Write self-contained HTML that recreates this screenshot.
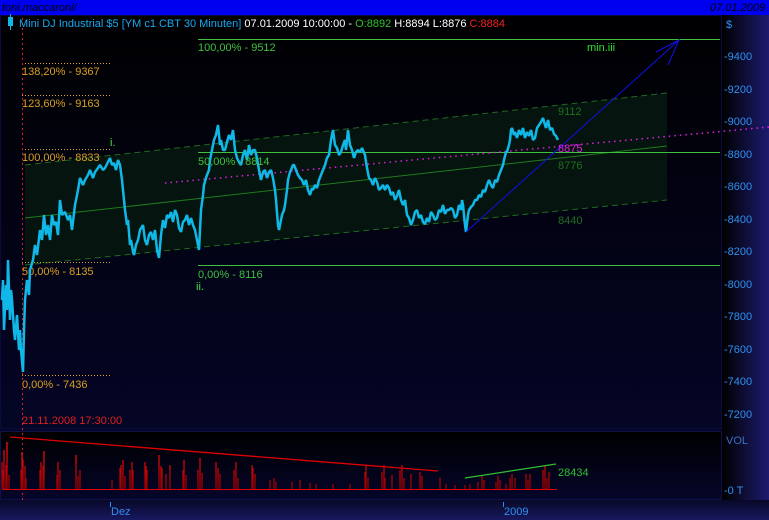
<!DOCTYPE html>
<html><head><meta charset="utf-8"><style>
html,body{margin:0;padding:0;width:769px;height:520px;overflow:hidden;background:#000;}
svg{display:block;font-family:"Liberation Sans",sans-serif;}
</style></head><body>
<svg width="769" height="520" viewBox="0 0 769 520" xmlns="http://www.w3.org/2000/svg">
<defs>
<linearGradient id="bg" x1="0" y1="0" x2="0" y2="1"><stop offset="0" stop-color="#000"/><stop offset="1" stop-color="#06062e"/></linearGradient>
<linearGradient id="ax" x1="0" y1="0" x2="1" y2="0"><stop offset="0" stop-color="#000"/><stop offset="1" stop-color="#1c1c70"/></linearGradient>
<linearGradient id="bt" x1="0" y1="0" x2="0" y2="1"><stop offset="0" stop-color="#080828"/><stop offset="1" stop-color="#181860"/></linearGradient>
<linearGradient id="vb" x1="0" y1="0" x2="0" y2="1"><stop offset="0" stop-color="#000"/><stop offset="1" stop-color="#05052a"/></linearGradient>
<linearGradient id="vr" x1="0" y1="0" x2="0" y2="1"><stop offset="0" stop-color="#ff1010"/><stop offset="1" stop-color="#900000"/></linearGradient>
</defs>
<rect x="0" y="0" width="769" height="520" fill="url(#bg)"/>
<rect x="722" y="15" width="47" height="490" fill="url(#ax)"/>
<rect x="0" y="500" width="769" height="20" fill="url(#bt)"/>
<rect x="0" y="0" width="769" height="15" fill="#0000f0"/>
<text x="2" y="11" font-size="11" font-style="italic" fill="#000">toni.maccaroni/</text>
<text x="710" y="11" font-size="11" font-style="italic" fill="#000">07.01.2009</text>
<rect x="0.5" y="15.5" width="721" height="413" fill="none" stroke="#0a0a40"/>
<rect x="0.5" y="431.5" width="721" height="68" fill="url(#vb)" stroke="#10104a"/>
<polygon points="25,165 667,93 667,200 25,265" fill="#05140e"/>
<line x1="25" y1="165" x2="667" y2="93" stroke="#1f6a1f" stroke-dasharray="6,4"/>
<line x1="25" y1="265" x2="667" y2="200" stroke="#1f6a1f" stroke-dasharray="6,4"/>
<line x1="25" y1="218" x2="667" y2="146" stroke="#1f7a1f"/>
<line x1="198" y1="39.5" x2="720" y2="39.5" stroke="#3fc03f"/>
<line x1="198" y1="152.5" x2="720" y2="152.5" stroke="#3fc03f"/>
<line x1="198" y1="265.5" x2="720" y2="265.5" stroke="#3fc03f"/>
<g stroke="#d8a020" stroke-dasharray="1,2">
<line x1="22" y1="63.5" x2="112" y2="63.5"/><line x1="22" y1="95.5" x2="112" y2="95.5"/>
<line x1="22" y1="149.5" x2="112" y2="149.5"/><line x1="22" y1="262.5" x2="112" y2="262.5"/>
<line x1="22" y1="375.5" x2="112" y2="375.5"/>
</g>
<g font-size="11" fill="#d8a020">
<text x="22" y="75">138,20% - 9367</text><text x="22" y="107">123,60% - 9163</text>
<text x="22" y="161">100,00% - 8833</text><text x="22" y="275">50,00% - 8135</text>
<text x="22" y="388">0,00% - 7436</text>
</g>
<line x1="22.5" y1="18" x2="22.5" y2="500" stroke="#e02020" stroke-dasharray="2,3"/>
<text x="22" y="424" font-size="11" fill="#e02020">21.11.2008 17:30:00</text>
<line x1="165" y1="183" x2="769" y2="127" stroke="#e020e0" stroke-width="1.5" stroke-dasharray="1.5,4"/>
<polyline fill="none" stroke="#10b8e8" stroke-width="2.5" stroke-linejoin="bevel" points="2,300 3,280 4,330 6,285 7,310 8,260 10,320 11,290 12,300 14,330 15,340 17,315 19,350 20,330 21,350 23,372 24,330 25,300 27,280 29,295 30,270 33,260 35,245 37,255 40,230 42,240 44,215 46,235 48,225 50,240 52,215 54,225 56,222 58,235 60,200 62,215 65,212 68,220 70,215 72,230 75,205 78,190 80,178 83,185 85,180 88,175 90,170 93,178 95,172 98,168 100,165 103,170 105,168 108,162 110,158 112,165 114,163 116,170 118,160 120,165 122,180 124,200 125,210 127,225 128,220 130,245 131,240 133,252 134,255 136,245 138,240 140,230 143,225 145,240 147,245 149,235 151,232 153,240 155,230 157,250 159,258 161,235 163,220 165,228 167,215 169,218 171,212 173,222 175,210 177,215 179,228 181,232 183,222 185,220 187,215 189,225 191,218 193,225 195,230 197,240 199,250 200,230 201,210 203,195 204,185 206,178 207,175 209,170 210,160 212,150 214,140 216,135 218,125 220,145 221,140 223,150 225,150 227,142 229,135 231,140 233,130 235,150 237,158 239,162 241,165 243,155 245,150 247,160 249,145 251,155 253,150 255,150 257,158 259,170 261,180 263,172 265,170 267,178 269,172 271,170 273,178 275,190 276,200 278,225 279,230 281,220 282,215 284,210 285,205 287,190 288,180 290,172 291,170 293,165 294,165 296,170 298,175 300,178 302,180 304,185 306,180 308,190 310,195 312,188 313,190 315,185 317,188 319,180 321,175 323,170 325,165 327,158 329,155 331,140 333,130 335,145 337,148 339,155 341,152 343,145 345,140 346,150 348,130 350,145 352,150 354,158 356,152 358,150 360,152 362,148 365,155 367,168 369,178 371,180 373,185 375,178 377,182 379,190 381,188 383,185 385,190 387,185 389,188 391,195 393,192 395,200 397,196 399,190 401,200 403,205 405,200 407,215 409,218 411,225 413,220 415,212 417,210 419,218 421,215 423,222 425,224 427,218 429,222 431,212 433,215 435,220 437,218 439,210 441,212 443,205 445,214 447,210 449,210 451,208 453,210 455,218 457,215 459,205 461,210 462,200 463,205 465,225 466,232 468,215 469,210 471,207 473,205 475,200 477,200 479,195 481,197 483,190 485,192 487,185 489,180 491,185 493,188 495,180 497,182 499,175 501,170 503,165 504,160 506,152 507,152 509,145 510,140 511,130 512,128 514,135 515,132 517,138 519,130 521,135 523,128 525,138 527,132 529,136 531,130 533,140 535,138 537,128 539,125 541,122 543,118 545,125 546,128 548,120 550,130 552,128 554,134 556,136 558,140"/>
<line x1="466" y1="232" x2="679" y2="40" stroke="#1010e8"/>
<polyline points="656,52 679,40 668,65" fill="none" stroke="#1010e8"/>
<g font-size="11">
<text x="198" y="51" fill="#3fc03f">100,00% - 9512</text>
<text x="198" y="165" fill="#3fc03f">50,00% - 8814</text>
<text x="198" y="278" fill="#3fc03f">0,00% - 8116</text>
<text x="196" y="290" fill="#40e040">ii.</text>
<text x="110" y="146" fill="#40e040">i.</text>
<text x="587" y="51" fill="#30e030">min.iii</text>
<text x="558" y="115" fill="#207020">9112</text>
<text x="558" y="152" fill="#e020e0">8875</text>
<text x="558" y="169" fill="#207020">8776</text>
<text x="558" y="224" fill="#207020">8440</text>
</g>
<rect x="8" y="17" width="5" height="9" fill="#10b8e8"/><line x1="10.5" y1="14" x2="10.5" y2="30" stroke="#10b8e8"/>
<text x="19" y="27" font-size="11"><tspan fill="#18a8f0">Mini DJ Industrial $5 [YM c1 CBT  30 Minuten]</tspan><tspan fill="#fff"> 07.01.2009 10:00:00 - </tspan><tspan fill="#30c030">O:8892</tspan><tspan fill="#fff"> H:8894 L:8876 </tspan><tspan fill="#f02020">C:8884</tspan></text>
<g font-size="11" fill="#3090f0">
<text x="726" y="28">$</text>
<text x="724" y="60">-9400</text><text x="724" y="93">-9200</text><text x="724" y="125">-9000</text>
<text x="724" y="158">-8800</text><text x="724" y="190">-8600</text><text x="724" y="223">-8400</text>
<text x="724" y="255">-8200</text><text x="724" y="288">-8000</text><text x="724" y="320">-7800</text>
<text x="724" y="353">-7600</text><text x="724" y="385">-7400</text><text x="724" y="418">-7200</text>
<text x="726" y="444" fill="#3a70c0">VOL</text><text x="724" y="494">-0 T</text>
<text x="111" y="515">Dez</text><text x="504" y="515">2009</text>
</g>
<line x1="110.5" y1="502" x2="110.5" y2="507" stroke="#3090f0"/><line x1="503.5" y1="502" x2="503.5" y2="507" stroke="#3090f0"/>
<line x1="2" y1="489.5" x2="557" y2="489.5" stroke="#e00000"/>
<path stroke="url(#vr)" fill="none" stroke-width="1.3" d="M2 489V462M3 489V470M4 489V450M6 489V465M7 489V442M9 489V475M21 489V470M22 489V452M23 489V460M25 489V466M26 489V478M40 489V470M41 489V462M43 489V466M44 489V451M57 489V475M58 489V462M60 489V470M76 489V455M78 489V476M80 489V470M112 489V480M120 489V468M121 489V465M123 489V460M125 489V476M130 489V470M132 489V462M133 489V470M145 489V462M146 489V466M147 489V470M159 489V455M161 489V466M162 489V468M166 489V474M170 489V465M183 489V470M184 489V460M186 489V475M198 489V470M200 489V458M202 489V473M216 489V462M218 489V468M220 489V474M234 489V470M236 489V462M238 489V478M252 489V465M253 489V468M255 489V474M270 489V480M274 489V478M276 489V482M292 489V482M300 489V480M310 489V483M316 489V484M333 489V484M350 489V484M365 489V472M366 489V466M368 489V478M382 489V472M384 489V465M385 489V478M392 489V475M400 489V470M402 489V465M404 489V478M411 489V474M420 489V472M422 489V476M440 489V478M446 489V484M455 489V485M465 489V485M470 489V484M478 489V482M482 489V475M484 489V480M496 489V482M498 489V476M500 489V480M506 489V484M510 489V478M512 489V474M515 489V478M526 489V474M528 489V480M530 489V474M543 489V470M545 489V465M547 489V478M549 489V472"/>
<line x1="10" y1="437" x2="438" y2="471" stroke="#e00000" stroke-width="1.3"/>
<line x1="465" y1="478" x2="556" y2="464" stroke="#30c030" stroke-width="1.3"/>
<text x="558" y="476" font-size="11" fill="#30c030">28434</text>
</svg>
</body></html>
